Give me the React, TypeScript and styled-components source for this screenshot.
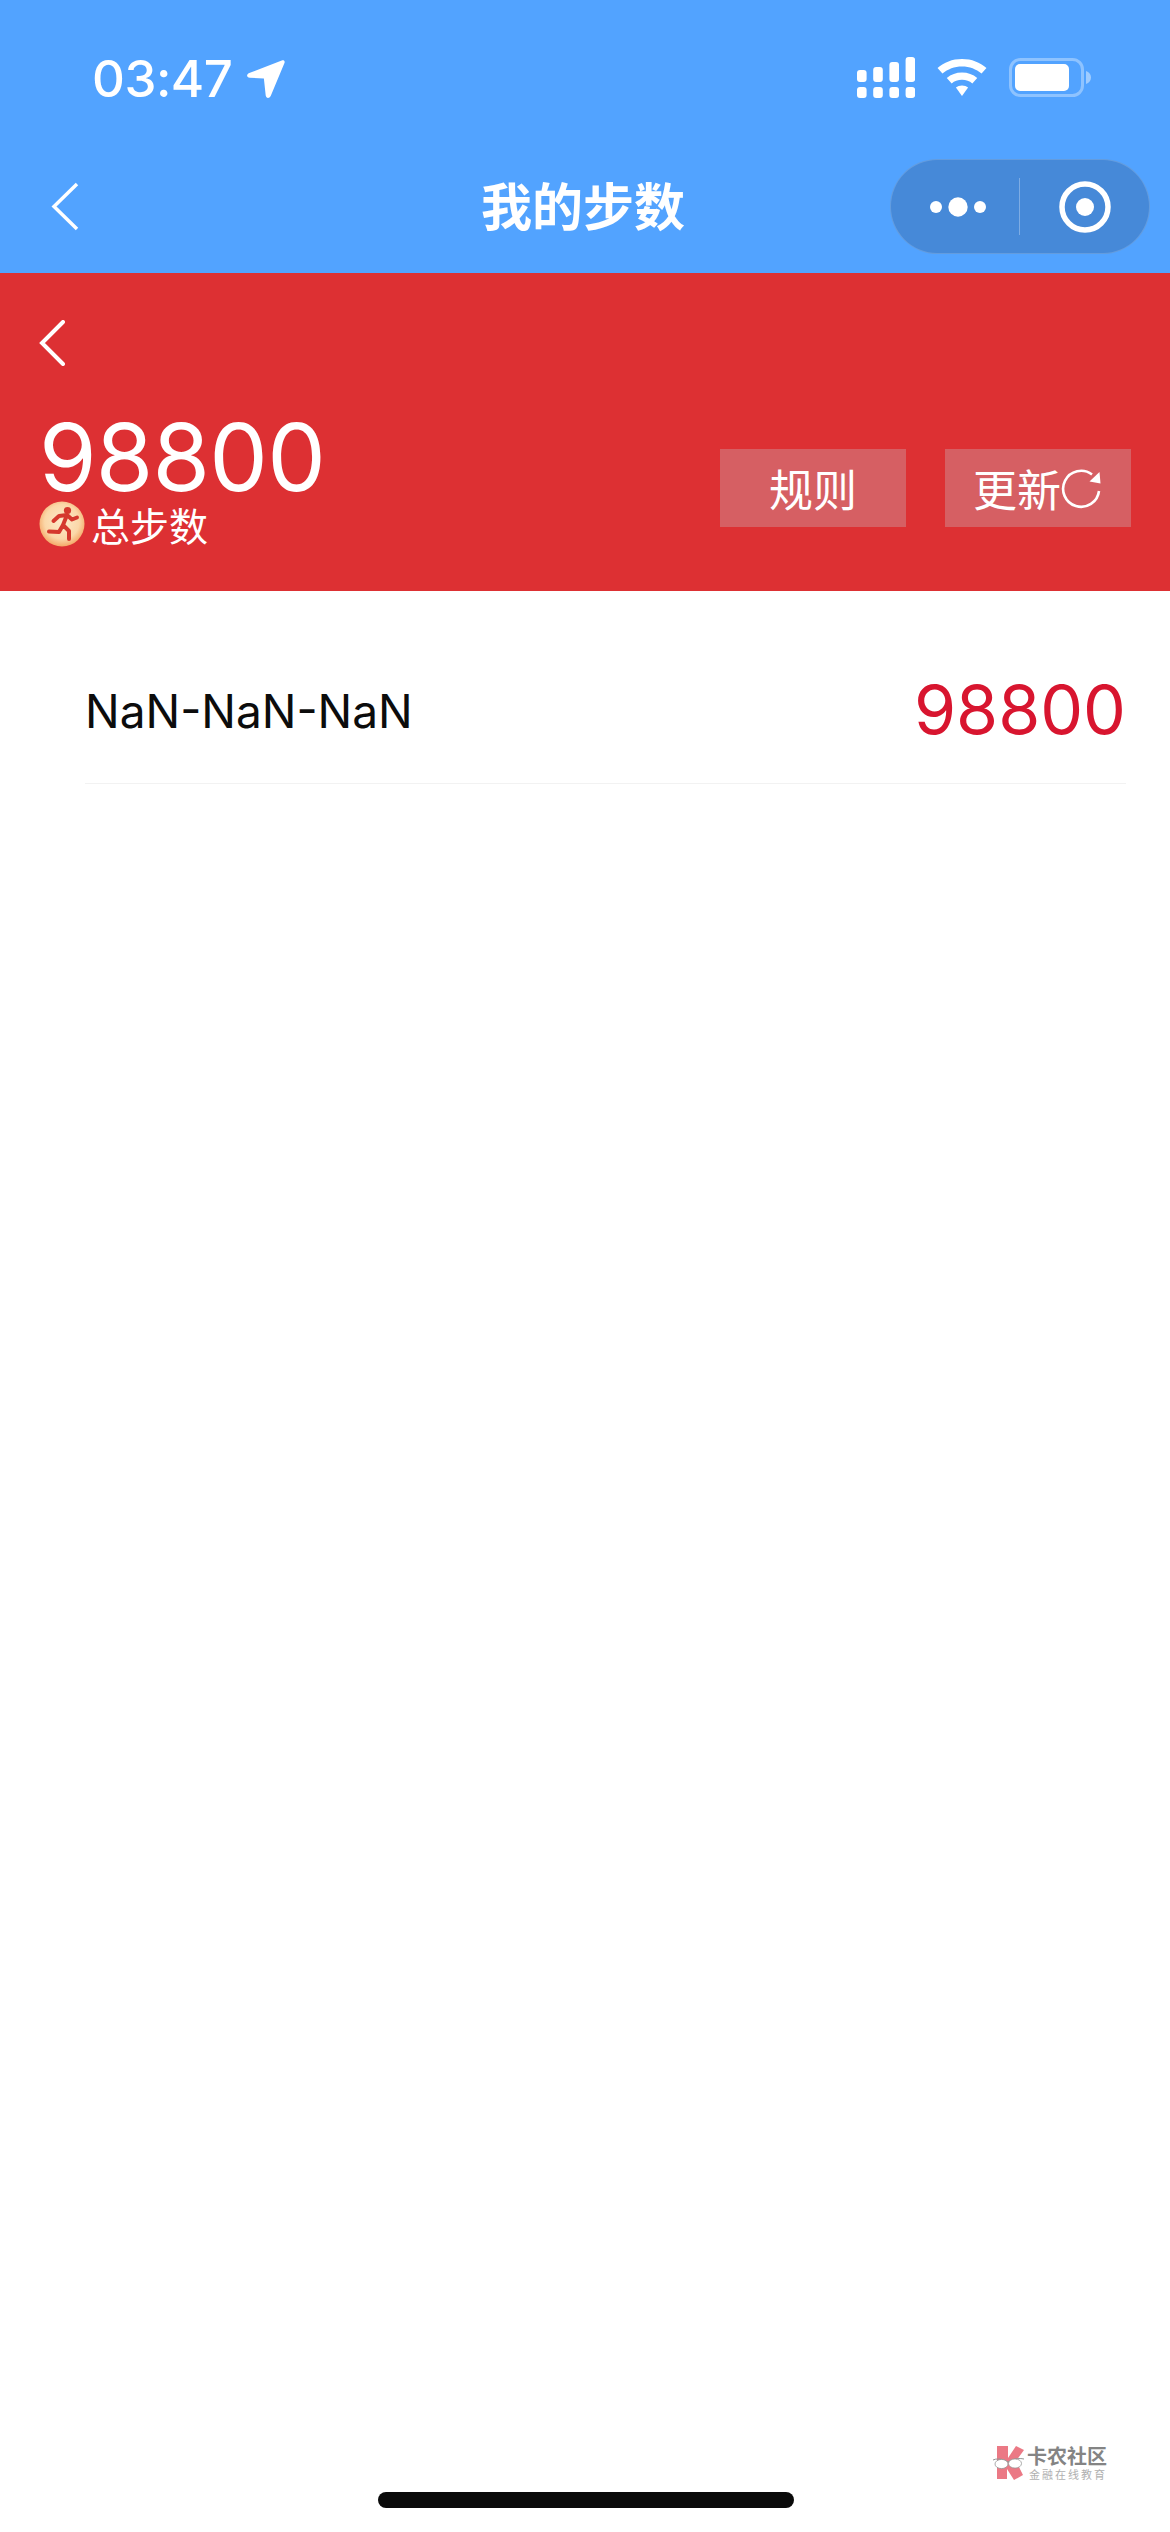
import React from "react";
import styled, { createGlobalStyle } from "styled-components";

const GlobalStyle = createGlobalStyle`
  html, body {
    margin: 0;
    padding: 0;
    background: #fff;
    font-family: Inter, "Noto Sans CJK SC", sans-serif;
  }
`;

const Page = styled.div`
  position: relative;
  width: 1170px;
  height: 2532px;
  overflow: hidden;
  background: #fff;
`;

const BlueHeader = styled.header`
  background: #52a3ff;
  height: 273px;
  display: flex;
  flex-direction: column;
`;

const StatusBar = styled.div`
  height: 154px;
  padding: 50px 79px 0 92px;
  box-sizing: border-box;
  display: flex;
  justify-content: space-between;
  align-items: flex-start;
  color: #fff;
`;

const Clock = styled.div`
  display: flex;
  align-items: center;
  gap: 14px;
  font-size: 51px;
  font-weight: 500;
  line-height: 58px;
  letter-spacing: -0.5px;
`;

const StatusIcons = styled.div`
  display: flex;
  align-items: center;
  gap: 22px;
  padding: 7px 0 0;
`;

const NavBar = styled.nav`
  flex: 1;
  display: grid;
  grid-template-columns: 1fr auto 1fr;
  align-items: start;
  padding: 5px 20px 0 16px;
`;

const NavBack = styled.div`
  display: flex;
  padding: 23px 0 0 35px;
`;

const NavTitle = styled.h1`
  margin: 0;
  padding-top: 11px;
  color: #fff;
  font-family: "Noto Sans CJK SC", sans-serif;
  font-size: 51px;
  font-weight: 700;
  line-height: 68px;
`;

const Capsule = styled.div`
  justify-self: end;
  width: 260px;
  height: 95px;
  box-sizing: border-box;
  border-radius: 48px;
  border: 1px solid rgba(255, 255, 255, 0.16);
  background: #4689d8;
  display: grid;
  grid-template-columns: 128px 1px 1fr;
  align-items: center;
  justify-items: center;
`;

const CapsuleLine = styled.span`
  width: 1px;
  height: 57px;
  background: rgba(255, 255, 255, 0.3);
`;

const Banner = styled.section`
  background: #dd3033;
  height: 318px;
  box-sizing: border-box;
  padding: 47px 39px 0 39px;
  color: #fff;
`;

const BannerBack = styled.div`
  display: flex;
  height: 46px;
`;

const BannerBody = styled.div`
  display: flex;
  justify-content: space-between;
  align-items: flex-start;
  padding-top: 48px;
`;

const TotalBlock = styled.div`
  display: flex;
  flex-direction: column;
`;

const TotalValue = styled.div`
  font-size: 93px;
  line-height: 87px;
  letter-spacing: -0.8px;
`;

const TotalLabel = styled.div`
  display: flex;
  align-items: center;
  gap: 6px;
  font-family: "Noto Sans CJK SC", sans-serif;
  font-size: 39px;
  line-height: 46px;
`;

const Actions = styled.div`
  display: flex;
  gap: 39px;
  padding-top: 35px;
`;

const ActionButton = styled.div`
  width: 186px;
  height: 78px;
  background: #d65f63;
  display: flex;
  align-items: center;
  justify-content: center;
  font-family: "Noto Sans CJK SC", sans-serif;
  font-size: 44px;
  line-height: 78px;
`;

const StepList = styled.main`
  padding: 41px 44px 0 85px;
`;

const StepRow = styled.div`
  display: flex;
  justify-content: space-between;
  align-items: center;
  height: 152px;
  box-sizing: border-box;
  border-bottom: 1px solid #f2f2f2;
`;

const StepDate = styled.span`
  font-size: 46px;
  color: #0c0c0c;
  margin-top: 6px;
`;

const StepCount = styled.span`
  font-size: 68px;
  color: #d8152f;
  margin-top: 2px;
`;

const HomeIndicator = styled.div`
  position: absolute;
  left: 378px;
  top: 2492px;
  width: 416px;
  height: 16px;
  border-radius: 8px;
  background: #0a0a0a;
`;

const Watermark = styled.div`
  position: absolute;
  left: 992px;
  top: 2444px;
  display: flex;
  align-items: center;
  gap: 2px;
  opacity: 0.9;
`;

const WatermarkText = styled.div`
  display: flex;
  flex-direction: column;
  font-family: "Noto Sans CJK SC", sans-serif;
`;

const WatermarkName = styled.span`
  font-size: 20px;
  line-height: 23px;
  font-weight: 700;
  color: #777;
`;

const WatermarkSlogan = styled.span`
  font-size: 11px;
  line-height: 14px;
  letter-spacing: 2px;
  padding-left: 2px;
  color: #a8a8a8;
`;

const Chevron: React.FC<{ w: number; h: number; stroke: number; round?: boolean }> = ({ w, h, stroke, round }) => (
  <svg width={w} height={h} viewBox={`0 0 ${w} ${h}`} fill="none">
    <path
      d={`M${w - 2} 2 L3 ${h / 2} L${w - 2} ${h - 2}`}
      stroke="#fff"
      strokeWidth={stroke}
      strokeLinecap={round ? "round" : "butt"}
    />
  </svg>
);

const LocationArrow = () => (
  <svg width="39" height="40" viewBox="0 0 36 40" fill="#fff" preserveAspectRatio="none">
    <path d="M33 1.5 L3 14 C0 15.4 0.5 18.6 3.5 18.8 L16.5 19.5 L18.2 36.5 C18.6 39.6 21.5 39.8 22.8 37 L35.5 4 C36.2 2 34.9 0.8 33 1.5 Z" />
  </svg>
);

const SignalBars = () => {
  const tops = [13, 10, 5, 0];
  return (
    <svg width="58" height="41" viewBox="0 0 58 41" fill="#fff">
      {tops.map((top, i) => (
        <g key={i}>
          <rect x={i * 16.2} y={top} width="9.6" height={25 - top} rx="3" />
          <rect x={i * 16.2} y="30" width="9.6" height="11" rx="3" />
        </g>
      ))}
    </svg>
  );
};

const WifiIcon = () => (
  <svg width="50" height="38" viewBox="0 0 46 38" fill="#fff" preserveAspectRatio="none">
    <path d="M23 0 C14 0 6.5 3.4 0.5 9 L5 14.5 C10 10 16 7.4 23 7.4 C30 7.4 36 10 41 14.5 L45.5 9 C39.5 3.4 32 0 23 0 Z" />
    <path d="M23 13.5 C17.5 13.5 13 15.4 9 19 L13.5 24.4 C16 22.2 19.2 20.8 23 20.8 C26.8 20.8 30 22.2 32.5 24.4 L37 19 C33 15.4 28.5 13.5 23 13.5 Z" />
    <path d="M23 26.5 C20.8 26.5 18.8 27.2 17.4 28.6 L23 37 L28.6 28.6 C27.2 27.2 25.2 26.5 23 26.5 Z" />
  </svg>
);

const BatteryIcon = () => (
  <svg width="82" height="39" viewBox="0 0 82 39" fill="none">
    <rect x="1.5" y="1.5" width="72" height="36" rx="10" stroke="#fff" strokeOpacity="0.35" strokeWidth="3" />
    <rect x="6" y="6" width="54" height="27" rx="5" fill="#fff" />
    <path d="M77 13 C80 14 82 16.5 82 19.5 C82 22.5 80 25 77 26 Z" fill="#fff" fillOpacity="0.45" />
  </svg>
);

const MoreDots = () => (
  <svg width="61" height="22" viewBox="0 0 61 22" fill="#fff">
    <circle cx="11" cy="11" r="6" />
    <circle cx="33" cy="11" r="9.7" />
    <circle cx="55" cy="11" r="6" />
  </svg>
);

const RecordIcon = () => (
  <svg width="52" height="52" viewBox="0 0 52 52" fill="none">
    <circle cx="26" cy="26" r="23" stroke="#fff" strokeWidth="5.5" />
    <circle cx="26" cy="26" r="9" fill="#fff" />
  </svg>
);

const RunnerBadge = () => (
  <svg width="46" height="46" viewBox="0 0 46 46">
    <defs>
      <radialGradient id="badge" cx="50%" cy="45%" r="55%">
        <stop offset="0%" stopColor="#fdeacb" />
        <stop offset="70%" stopColor="#fbd7a8" />
        <stop offset="100%" stopColor="#f4a868" />
      </radialGradient>
    </defs>
    <circle cx="23" cy="23" r="22.5" fill="url(#badge)" />
    <circle cx="28.5" cy="9.5" r="3.6" fill="#d5382d" />
    <path
      d="M20 15 L28 14 L33 18.5 L38 16.5 M28 14 L24 24 L30 30 L30 38 M24 24 L20 31 L10 30.5 M20 15 L14.5 20"
      fill="none"
      stroke="#d5382d"
      strokeWidth="4"
      strokeLinecap="round"
      strokeLinejoin="round"
    />
  </svg>
);

const RefreshIcon = () => (
  <svg width="42" height="42" viewBox="0 0 42 42" fill="none">
    <path d="M38 24 A18 18 0 1 1 31 7.5" stroke="#fff" strokeWidth="2.6" />
    <path d="M38.5 5 L39.5 16.5 L28.5 14.5 Z" fill="#fff" />
  </svg>
);

const WatermarkLogo = () => (
  <svg width="33" height="36" viewBox="0 0 33 36">
    <path d="M5 1 H16 V13 L24 1 L32 5 L24 16 L31 30 L22 35 L15 24 V34 H5 Z" fill="#e96b78" />
    <path d="M1 15 C4 13.5 9 13.5 13 15.5 L16 17 L19 15.5 C23 13.5 28 13 32 14" fill="none" stroke="#8a8a8a" strokeWidth="1" />
    <ellipse cx="9.5" cy="19" rx="6.5" ry="4.6" fill="#fff" stroke="#8a8a8a" strokeWidth="0.8" />
    <ellipse cx="23" cy="18.5" rx="6.5" ry="4.6" fill="#fff" stroke="#8a8a8a" strokeWidth="0.8" />
  </svg>
);

const App: React.FC = () => {
  return (
    <Page>
      <GlobalStyle />
      <BlueHeader>
        <StatusBar>
          <Clock>
            03:47
            <LocationArrow />
          </Clock>
          <StatusIcons>
            <SignalBars />
            <WifiIcon />
            <BatteryIcon />
          </StatusIcons>
        </StatusBar>
        <NavBar>
          <NavBack>
            <Chevron w={28} h={49} stroke={3.5} />
          </NavBack>
          <NavTitle>我的步数</NavTitle>
          <Capsule>
            <MoreDots />
            <CapsuleLine />
            <RecordIcon />
          </Capsule>
        </NavBar>
      </BlueHeader>

      <Banner>
        <BannerBack>
          <Chevron w={26} h={46} stroke={4} round />
        </BannerBack>
        <BannerBody>
          <TotalBlock>
            <TotalValue>98800</TotalValue>
            <TotalLabel>
              <RunnerBadge />
              总步数
            </TotalLabel>
          </TotalBlock>
          <Actions>
            <ActionButton>规则</ActionButton>
            <ActionButton>
              更新
              <RefreshIcon />
            </ActionButton>
          </Actions>
        </BannerBody>
      </Banner>

      <StepList>
        <StepRow>
          <StepDate>NaN-NaN-NaN</StepDate>
          <StepCount>98800</StepCount>
        </StepRow>
      </StepList>

      <Watermark>
        <WatermarkLogo />
        <WatermarkText>
          <WatermarkName>卡农社区</WatermarkName>
          <WatermarkSlogan>金融在线教育</WatermarkSlogan>
        </WatermarkText>
      </Watermark>
      <HomeIndicator />
    </Page>
  );
};

export default App;
